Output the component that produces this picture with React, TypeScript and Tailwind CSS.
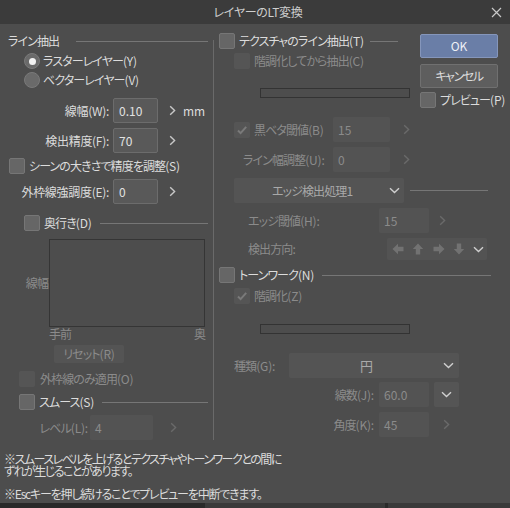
import React from "react";

const TXT = "text-[#dcdcdc]";
const DIM = "text-[#8b8b8b]";

// keep the "(X)" shortcut suffix at normal spacing, squeeze the kana part
function fmt(s: string) {
  const m = s.match(/^(.*?)(\(.*)$/);
  if (!m) return s;
  return (
    <>
      {m[1]}
      <span className="tracking-[-0.2px]">{m[2]}</span>
    </>
  );
}

function Box({ checked, disabled }: { checked?: boolean; disabled?: boolean }) {
  return (
    <span
      className={`w-4 h-4 shrink-0 rounded-[2px] flex items-center justify-center ${
        disabled ? "bg-[#555555]" : "bg-[#666666] border border-[#767676]"
      }`}
    >
      {checked && (
        <svg width="12" height="12" viewBox="0 0 12 12">
          <path d="M2 6.5l2.6 2.6L10.2 2.8" stroke={disabled ? "#7a7a7a" : "#eeeeee"} strokeWidth="2" fill="none" />
        </svg>
      )}
    </span>
  );
}

function Radio({ on }: { on?: boolean }) {
  return (
    <span className="w-4 h-4 shrink-0 rounded-full bg-[#6a6a6a] border border-[#7a7a7a] flex items-center justify-center">
      {on && <span className="w-[7px] h-[7px] rounded-full bg-[#f2f2f2]" />}
    </span>
  );
}

function Field({ value, className, disabled }: { value: string; className: string; disabled?: boolean }) {
  return (
    <span
      className={`h-[25px] shrink-0 rounded-[2px] flex items-center pl-[5px] tracking-normal ${className} ${
        disabled ? "bg-[#535353] text-[#8b8b8b]" : "bg-[#595959] border border-[#6c6c6c] text-[#e2e2e2]"
      }`}
    >
      {value}
    </span>
  );
}

function ChevR({ dim, className }: { dim?: boolean; className?: string }) {
  return (
    <svg width="7" height="11" viewBox="0 0 7 11" className={`shrink-0 ${className ?? ""}`}>
      <path d="M1.2 1.2L5.6 5.5L1.2 9.8" stroke={dim ? "#6a6a6a" : "#c8c8c8"} strokeWidth="1.4" fill="none" />
    </svg>
  );
}

function ChevD({ className }: { className?: string }) {
  return (
    <svg width="11" height="7" viewBox="0 0 11 7" className={`shrink-0 ${className ?? ""}`}>
      <path d="M1 1.2L5.5 5.6L10 1.2" stroke="#cfcfcf" strokeWidth="1.4" fill="none" />
    </svg>
  );
}

function Arrow({ rot }: { rot: number }) {
  return (
    <svg width="12" height="12" viewBox="0 0 12 12" style={{ transform: `rotate(${rot}deg)` }}>
      <path d="M0.5 6L6 0.8V3.8H11.5V8.2H6V11.2Z" fill="#727272" />
    </svg>
  );
}

function Rule({ className }: { className: string }) {
  return <span className={`h-px bg-[#767676] ${className}`} />;
}

export default function App() {
  return (
    <div className="w-[510px] h-[508px] overflow-hidden bg-[#4d4d4d] font-['Noto_Sans_CJK_JP',sans-serif] text-[12px] leading-[16px] tracking-[-0.9px] [font-feature-settings:'palt'] text-[#dcdcdc] flex flex-col">
      {/* title bar */}
      <div className="h-[24px] shrink-0 bg-[#3b3b3b] flex items-center relative">
        <span className="flex-1 text-center text-[#cfcfcf] pl-[6px] tracking-[-0.3px]">レイヤーのLT変換</span>
        <svg width="11" height="11" viewBox="0 0 11 11" className="absolute right-[8px] top-[7px]">
          <path d="M1 1L10 10M10 1L1 10" stroke="#c8c8c8" strokeWidth="1.2" />
        </svg>
      </div>

      <div className="flex pt-[9px]">
        {/* left column */}
        <div className="w-[213px] shrink-0 flex flex-col">
          <div className="h-4 flex items-center pl-2">
            <span>ライン抽出</span>
            <Rule className="ml-[17px] flex-1 mr-[5px]" />
          </div>
          <div className="mt-1 h-4 flex items-center pl-[24px] gap-[3px]">
            <Radio on />
            <span>{fmt("ラスターレイヤー(Y)")}</span>
          </div>
          <div className="mt-[3px] h-4 flex items-center pl-[24px] gap-[3px]">
            <Radio />
            <span>{fmt("ベクターレイヤー(V)")}</span>
          </div>
          <div className="mt-[10px] h-[25px] flex items-center">
            <span className="w-[109px] text-right tracking-[-0.3px]">線幅(W):</span>
            <Field value="0.10" className="ml-1 w-[45px]" />
            <ChevR className="ml-[11px]" />
            <span className="ml-[7px] tracking-normal">mm</span>
          </div>
          <div className="mt-[5px] h-[25px] flex items-center">
            <span className="w-[109px] text-right tracking-[-0.3px]">検出精度(F):</span>
            <Field value="70" className="ml-1 w-[45px]" />
            <ChevR className="ml-[11px]" />
          </div>
          <div className="mt-[5px] h-4 flex items-center pl-[9px] gap-1">
            <Box />
            <span>{fmt("シーンの大きさで精度を調整(S)")}</span>
          </div>
          <div className="mt-[5px] h-[25px] flex items-center">
            <span className="w-[109px] text-right tracking-[-0.3px]">外枠線強調度(E):</span>
            <Field value="0" className="ml-1 w-[45px]" />
            <ChevR className="ml-[11px]" />
          </div>
          <div className="mt-[11px] h-4 flex items-center pl-[24px]">
            <Box />
            <span className="ml-1">{fmt("奥行き(D)")}</span>
            <Rule className="ml-2 flex-1 mr-[5px]" />
          </div>
          <div className="mt-2 flex items-center">
            <span className={`w-[49px] text-right pr-[1px] ${DIM}`}>線幅</span>
            <div className="w-[156px] h-[88px] border border-[#353535]" />
          </div>
          <div className={`mt-px h-3 leading-[12px] ml-[49px] w-[156px] flex justify-between ${DIM}`}>
            <span>手前</span>
            <span>奥</span>
          </div>
          <div className={`mt-[5px] ml-[54px] w-[70px] h-[18px] bg-[#545454] rounded-[2px] flex items-center justify-center ${DIM}`}>
            {fmt("リセット(R)")}
          </div>
          <div className="mt-2 h-4 flex items-center pl-[19px]">
            <Box disabled />
            <span className={`ml-[5px] ${DIM}`}>{fmt("外枠線のみ適用(O)")}</span>
          </div>
          <div className="mt-[7px] h-4 flex items-center pl-[19px]">
            <Box />
            <span className="ml-1">{fmt("スムース(S)")}</span>
            <Rule className="ml-2 flex-1 mr-[5px]" />
          </div>
          <div className="mt-[5px] h-[25px] flex items-center">
            <span className={`w-[88px] text-right ${DIM}`}>{fmt("レベル(L):")}</span>
            <Field value="4" className="ml-[2px] w-[63px]" disabled />
            <ChevR dim className="ml-[17px]" />
          </div>
        </div>

        {/* divider */}
        <div className="w-px mt-[7px] h-[400px] bg-[#6a6a6a] shrink-0" />

        {/* right column */}
        <div className="flex-1 flex flex-col">
          <div className="flex">
            <div className="w-[206px] flex flex-col">
              <div className="h-4 flex items-center pl-[5px]">
                <Box />
                <span className="ml-1">{fmt("テクスチャのライン抽出(T)")}</span>
                <Rule className="ml-[6px] flex-1 mr-[22px]" />
              </div>
              <div className="mt-1 h-4 flex items-center pl-[20px]">
                <Box disabled />
                <span className={`ml-1 ${DIM}`}>{fmt("階調化してから抽出(C)")}</span>
              </div>
              <div className="mt-[19px] ml-[46px] w-[150px] h-[10px] border border-[#333333]" />
            </div>
            <div className="w-[78px] mt-px flex flex-col">
              <div className="h-6 rounded-[2px] bg-[#6a7ea7] border border-[#8596bb] flex items-center justify-center text-[#eef0f6] tracking-normal">
                OK
              </div>
              <div className="mt-[6px] h-6 rounded-[2px] bg-[#5e5e5e] border border-[#707070] flex items-center justify-center tracking-[-1.4px]">
                キャンセル
              </div>
              <div className="mt-1 h-4 flex items-center whitespace-nowrap">
                <Box />
                <span className="ml-1">{fmt("プレビュー(P)")}</span>
              </div>
            </div>
          </div>

          <div className="mt-[9px] h-[25px] flex items-center pl-[20px]">
            <Box checked disabled />
            <span className={`ml-1 w-[79px] ${DIM}`}>{fmt("黒ベタ閾値(B)")}</span>
            <Field value="15" className="w-[57px]" disabled />
            <ChevR dim className="ml-[13px]" />
          </div>
          <div className="mt-[5px] h-[25px] flex items-center pl-[29px]">
            <span className={`w-[90px] ${DIM}`}>{fmt("ライン幅調整(U):")}</span>
            <Field value="0" className="w-[57px]" disabled />
            <ChevR dim className="ml-[13px]" />
          </div>
          <div className="mt-[6px] h-[25px] flex items-center pl-[20px]">
            <div className="w-[170px] h-[25px] bg-[#545454] rounded-[2px] flex items-center pl-[38px] pr-[4px]">
              <span className="flex-1 text-[#a9a9a9]">エッジ検出処理1</span>
              <ChevD />
            </div>
            <Rule className="ml-[6px] w-[78px]" />
          </div>
          <div className="mt-[5px] h-[25px] flex items-center pl-[34px]">
            <span className={`w-[131px] ${DIM}`}>{fmt("エッジ閾値(H):")}</span>
            <Field value="15" className="w-[50px]" disabled />
            <ChevR dim className="ml-[10px]" />
          </div>
          <div className="mt-[5px] h-[22px] flex items-center pl-[34px]">
            <span className={`w-[139px] ${DIM}`}>検出方向:</span>
            <div className="w-[100px] h-[22px] bg-[#535353] rounded-[2px] flex items-center justify-between pl-[5px] pr-[3px]">
              <Arrow rot={0} />
              <Arrow rot={90} />
              <Arrow rot={180} />
              <Arrow rot={270} />
              <ChevD />
            </div>
          </div>
          <div className="mt-[7px] h-4 flex items-center pl-[5px]">
            <Box />
            <span className="ml-1">{fmt("トーンワーク(N)")}</span>
            <Rule className="ml-2 flex-1 mr-[19px]" />
          </div>
          <div className="mt-[5px] h-4 flex items-center pl-[20px]">
            <Box checked disabled />
            <span className={`ml-1 ${DIM}`}>{fmt("階調化(Z)")}</span>
          </div>
          <div className="mt-[20px] ml-[46px] w-[150px] h-[10px] border border-[#333333]" />
          <div className="mt-[19px] h-[25px] flex items-center pl-[20px]">
            <span className={`w-[55px] ${DIM}`}>{fmt("種類(G):")}</span>
            <div className="w-[170px] h-[25px] bg-[#545454] rounded-[2px] flex items-center pr-[5px]">
              <span className="flex-1 text-center text-[#a9a9a9] text-[13px]">円</span>
              <ChevD />
            </div>
          </div>
          <div className="mt-[4px] h-[25px] flex items-center">
            <span className={`w-[165px] text-right pr-[5px] ${DIM}`}>{fmt("線数(J):")}</span>
            <Field value="60.0" className="w-[50px]" disabled />
            <div className="ml-[5px] w-[25px] h-[25px] bg-[#555555] rounded-[2px] flex items-center justify-center">
              <ChevD />
            </div>
          </div>
          <div className="mt-[5px] h-[25px] flex items-center">
            <span className={`w-[165px] text-right pr-[5px] ${DIM}`}>{fmt("角度(K):")}</span>
            <Field value="45" className="w-[50px]" disabled />
            <ChevR dim className="ml-[14px]" />
          </div>
        </div>
      </div>

      {/* notes */}
      <div className={`mt-[13px] pl-[4px] leading-[12px] tracking-[-1.5px] ${TXT}`}>
        <div>※スムースレベルを上げるとテクスチャやトーンワークとの間に</div>
        <div>ずれが生じることがあります。</div>
        <div className="mt-[11px] tracking-[-1.2px]">※Escキーを押し続けることでプレビューを中断できます。</div>
      </div>

      <div className="mt-auto h-[5px] shrink-0 flex">
        <span className="w-[205px] bg-[#2a2a2a]" />
        <span className="w-[180px] bg-[#3a3a3a]" />
        <span className="w-[3px] bg-[#2a2a2a]" />
        <span className="flex-1 bg-[#3a3a3a]" />
      </div>
    </div>
  );
}
